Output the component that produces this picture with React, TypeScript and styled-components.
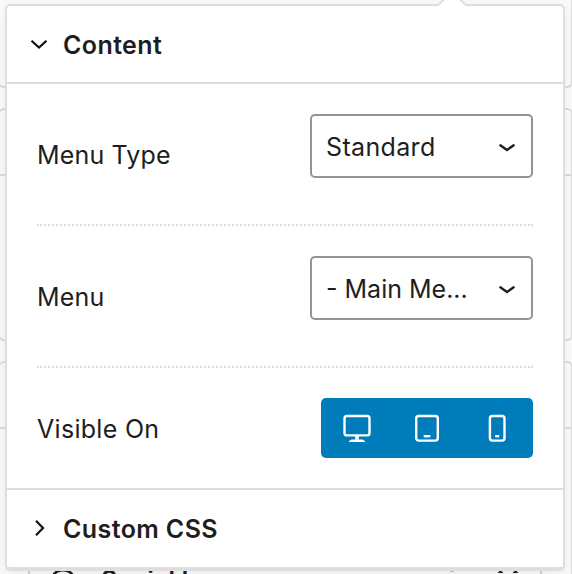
import React from "react";
import styled, { createGlobalStyle } from "styled-components";

const GlobalStyle = createGlobalStyle`
  * { box-sizing: border-box; }
  body { margin: 0; background: #f9f9f9; overflow: hidden; }
`;

const Stage = styled.main`
  position: relative;
  width: 572px;
  height: 574px;
  overflow: hidden;
  background: #fcfcfc;
  color: #1e1e1e;
  font-family: Inter, "Liberation Sans", sans-serif;
  font-size: 26px;
`;

const Backdrop = styled.div`
  display: flex;
  flex-direction: column;
  gap: 20px;
  width: 575px;
  margin-left: -2px;
`;

const Card = styled.section<{ $height: number; $open?: boolean }>`
  flex: none;
  height: ${(p) => p.$height}px;
  background: #fbfbfb;
  border: 2px solid #dcdcdc;
  border-top-width: ${(p) => (p.$open ? 0 : 2)}px;
  border-radius: ${(p) => (p.$open ? "0 0 6px 6px" : "6px")};
`;

const CardHeader = styled.div`
  height: 66px;
  border-bottom: 2px solid #dcdcdc;
`;

const Social = styled.div`
  display: flex;
  align-items: flex-start;
  height: 60px;
  width: 514px;
  margin: 91px 0 0 28px;
  padding: 44px 0 0 20px;
  border: 2px solid #d4d4d4;
  border-width: 0 2px;
  font-weight: 600;
  font-size: 25px;
  line-height: 32px;
  letter-spacing: 0.1px;
`;

const SocialLabel = styled.span`
  flex: 1;
  margin-left: 23px;
`;

const SocialIcon = styled.svg`
  flex: none;
  margin-top: 4px;
`;

const SocialActions = styled.svg`
  flex: none;
  margin-top: 5px;
`;

const Panel = styled.section`
  position: absolute;
  left: 5px;
  top: 4px;
  width: 560px;
  height: 567px;
  background: #fff;
  border: 2px solid #dedede;
  border-bottom-width: 4px;
  border-radius: 5px;
  box-shadow: 0 4px 16px rgba(0, 0, 0, 0.07);
`;

const Pointer = styled.svg`
  position: absolute;
  left: 430px;
  top: -6px;
`;

const SectionHeader = styled.header<{ $top?: boolean }>`
  display: flex;
  align-items: center;
  height: 78px;
  padding: 0 22px;
  border-bottom: ${(p) => (p.$top ? "none" : "2px solid #dedede")};
  border-top: ${(p) => (p.$top ? "2px solid #dedede" : "none")};
`;

const Title = styled.h2`
  margin: 1px 0 0 14px;
  font-size: 25px;
  font-weight: 600;
  line-height: 32px;
  letter-spacing: 0.4px;
`;

const Fields = styled.div`
  height: 404px;
  padding: 0 30px;
`;

const Field = styled.div<{ $height: number }>`
  display: flex;
  justify-content: space-between;
  height: ${(p) => p.$height}px;
  padding-top: 30px;
  & + & { border-top: 2px dotted #dcdcdc; }
`;

const Label = styled.label<{ $drop: number; $tracking?: number }>`
  margin-top: ${(p) => p.$drop}px;
  font-size: 25px;
  line-height: 32px;
  letter-spacing: ${(p) => p.$tracking ?? 0.15}px;
`;

const Select = styled.button<{ $tracking: number }>`
  display: flex;
  align-items: center;
  justify-content: space-between;
  width: 223px;
  height: 64px;
  padding: 2px 14px 0;
  border: 2px solid #949494;
  border-radius: 5px;
  background: #fff;
  color: #1e1e1e;
  font: 25px/32px Inter, "Liberation Sans", sans-serif;
  letter-spacing: ${(p) => p.$tracking}px;
`;

const Devices = styled.div`
  display: flex;
  width: 212px;
  height: 60px;
  border-radius: 5px;
  background: #007cba;
`;

const Device = styled.button`
  display: flex;
  align-items: center;
  justify-content: center;
  width: 70px;
  padding: 0;
  border: 0;
  background: none;
`;

const Chevron = ({ right = false }: { right?: boolean }) => (
  <svg width="20" height="20" viewBox="0 0 20 20" fill="none" stroke="#111" strokeWidth="2.2">
    <path d={right ? "M7 2.8 14 10 7 17.2" : "M2.5 6.8 10 13.5 17.5 6.8"} />
  </svg>
);

const SelectChevron = () => (
  <svg width="20" height="20" viewBox="0 0 20 20" fill="none" stroke="#1e1e1e" strokeWidth="2.3">
    <path d="M2.6 7.7 10 13 17.4 7.7" />
  </svg>
);

const Icon = ({ kind }: { kind: "desktop" | "tablet" | "phone" }) => (
  <svg width="30" height="30" viewBox="0 0 30 30" fill="none" stroke="#fff" strokeWidth="2.4">
    {kind === "desktop" && (
      <>
        <rect x="3.5" y="3" width="25" height="19.4" rx="2.5" />
        <path d="M16 23v3.8" strokeWidth="3.6" />
        <path d="M7.8 29c.8-1.8 2.4-2.4 4-2.4h8.4c1.6 0 3.2.6 4 2.4z" fill="#fff" stroke="none" />
      </>
    )}
    {kind === "tablet" && (
      <>
        <rect x="5.2" y="3" width="21.6" height="24.6" rx="2.5" />
        <path d="M12.7 23.2h6.6" />
      </>
    )}
    {kind === "phone" && (
      <>
        <rect x="8.9" y="3" width="14.6" height="24.6" rx="2.5" />
        <path d="M14.2 23.2h4" />
      </>
    )}
  </svg>
);

export default function App() {
  return (
    <Stage>
      <GlobalStyle />
      <Backdrop>
        <Card $height={88} $open />
        <Card $height={233}><CardHeader /></Card>
        <Card $height={300}>
          <CardHeader />
          <Social>
            <SocialIcon width="28" height="28" viewBox="0 0 28 28" fill="none" stroke="#1e1e1e" strokeWidth="2.5">
              <rect x="2" y="2.2" width="22" height="22" rx="10" />
            </SocialIcon>
            <SocialLabel>Social Icons</SocialLabel>
            <SocialActions width="92" height="20" viewBox="0 0 92 20" fill="#1e1e1e">
              <path d="M2 1h4v1.2H2zM49.5 4l3-3 3 3zM64.5 4l3-3 3 3z" />
            </SocialActions>
          </Social>
        </Card>
      </Backdrop>
      <Panel>
        <Pointer width="32" height="10" viewBox="0 0 32 10">
          <path d="M0 6 6-1h18l6 7v2H0z" fill="#fff" />
          <path d="M0 5h1.2L7.2-1M22.8-1l6 6H32" fill="none" stroke="#dedede" strokeWidth="2" />
        </Pointer>
        <SectionHeader>
          <Chevron />
          <Title>Content</Title>
        </SectionHeader>
        <Fields>
          <Field $height={140}>
            <Label $drop={25}>Menu Type</Label>
            <Select $tracking={0.35}>Standard<SelectChevron /></Select>
          </Field>
          <Field $height={142}>
            <Label $drop={25}>Menu</Label>
            <Select $tracking={0}>- Main Me...<SelectChevron /></Select>
          </Field>
          <Field $height={122}>
            <Label $drop={15} $tracking={0.3}>Visible On</Label>
            <Devices>
              <Device aria-label="Desktop"><Icon kind="desktop" /></Device>
              <Device aria-label="Tablet"><Icon kind="tablet" /></Device>
              <Device aria-label="Phone"><Icon kind="phone" /></Device>
            </Devices>
          </Field>
        </Fields>
        <SectionHeader $top>
          <Chevron right />
          <Title>Custom CSS</Title>
        </SectionHeader>
      </Panel>
    </Stage>
  );
}
